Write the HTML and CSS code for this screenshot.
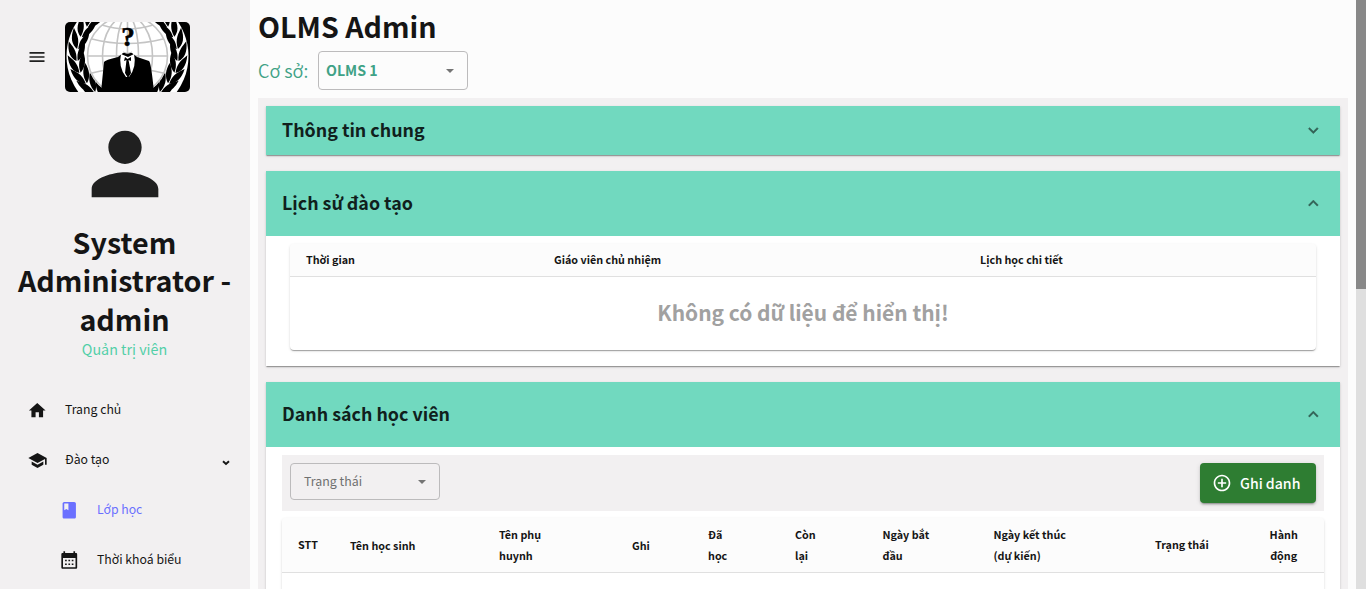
FILE: index.html
```html
<!DOCTYPE html>
<html lang="vi">
<head>
<meta charset="utf-8">
<title>OLMS Admin</title>
<link rel="stylesheet" href="styles.css">
</head>
<body>
<div class="app">
  <aside class="sidebar">
    <div class="brand">
      <svg class="menu-icon" viewBox="0 0 24 24" width="20" height="20"><path d="M3 18h18v-2H3v2zm0-5h18v-2H3v2zm0-7v2h18V6H3z"/></svg>
      <svg class="logo" viewBox="0 0 125 70" width="125" height="70">
        <defs>
          <g id="pair">
            <path d="M0 2C-6-1-9-7-7.500-18C-4-13 1-9 0 2z"/>
            <path d="M1.200 2C0-6 3-12 8.500-17C9.500-9 7-2 1.200 2z"/>
          </g>
          <g id="wreath">
            <use href="#pair" transform="translate(36 76) rotate(-42)"/>
            <use href="#pair" transform="translate(28 69) rotate(-36)"/>
            <use href="#pair" transform="translate(20 60) rotate(-26)"/>
            <use href="#pair" transform="translate(14 49) rotate(-13)"/>
            <use href="#pair" transform="translate(11.500 37) rotate(-1)"/>
            <use href="#pair" transform="translate(12.500 25) rotate(12)"/>
            <use href="#pair" transform="translate(16.500 13) rotate(24)"/>
            <use href="#pair" transform="translate(23 3) rotate(34)"/>
          </g>
        </defs>
        <rect width="125" height="70" fill="#000"/>
        <circle cx="62.500" cy="34" r="61" fill="#fff"/>
        <use href="#wreath"/>
        <use href="#wreath" transform="translate(125 0) scale(-1 1)"/>
        <circle cx="62.500" cy="34" r="41" fill="#fff"/>
        <g fill="none" stroke="#c4c4c4" stroke-width="1.600">
          <circle cx="62.500" cy="34" r="40"/>
          <ellipse cx="62.500" cy="34" rx="25" ry="40"/>
          <ellipse cx="62.500" cy="34" rx="11" ry="40"/>
          <path d="M62.500 0v70M22 34h81M27 17q35 9 71 0M27 51q35-9 71 0M37 3q25 8 51 0"/>
        </g>
        <path d="M36 70L39 40Q40 38 53 35L58 31H67L72 35L84 39Q86 40 89 70z"/>
        <path d="M56 32Q53 45 61 55L64 55Q72 45 69 32L63 35z" fill="#fff"/>
        <path d="M60 35L62.500 37L66 35V39L63.500 38L66 51L63 56L60 51L61.500 38L59 39z"/>
        <path d="M58 30Q62.500 33 67 30" fill="none" stroke="#bbb"/>
        <text class="mark" x="63" y="24.300" text-anchor="middle">?</text>
      </svg>
    </div>
    <svg class="avatar" viewBox="0 0 24 24" width="100" height="100"><path d="M12 12c2.210 0 4-1.790 4-4s-1.790-4-4-4-4 1.790-4 4 1.790 4 4 4zm0 2c-2.670 0-8 1.340-8 4v2h16v-2c0-2.660-5.330-4-8-4z"/></svg>
    <h2 class="user-name">System<br>Administrator -<br>admin</h2>
    <div class="role">Quản trị viên</div>
    <nav class="nav">
      <a class="nav-item"><svg viewBox="-.3 -.6 24 24" width="20" height="20"><path d="M10 20v-6h4v6h5v-8h3L12 3 2 12h3v8z"/></svg><span>Trang chủ</span></a>
      <a class="nav-item"><svg viewBox="-.6 -.6 24 24" width="20" height="20"><path d="M5 13.180v4L12 21l7-3.820v-4L12 17l-7-3.820zM12 3L1 9l11 6 9-4.910V17h2V9L12 3z"/></svg><span>Đào tạo</span><svg class="nav-arrow" viewBox="0 0 8 6" width="8" height="6"><path d="M1 1.200L4 4L7 1.200" fill="none" stroke="#151515" stroke-width="1.900"/></svg></a>
      <a class="nav-item sub active"><svg viewBox="-.3 -.3 24 24" width="20" height="20"><path d="M18 2H6c-1.100 0-2 .9-2 2v16c0 1.100.9 2 2 2h12c1.100 0 2-.9 2-2V4c0-1.100-.9-2-2-2zM6 4h5v8l-2.500-1.500L6 12V4z"/></svg><span>Lớp học</span></a>
      <a class="nav-item sub"><svg viewBox="-.3 -.6 24 24" width="20" height="20"><path fill-rule="evenodd" d="M20 3h-1V1h-2v2H7V1H5v2H4c-.8 0-1.500.7-1.500 1.500v16c0 .8.7 1.500 1.500 1.500h16c.8 0 1.500-.7 1.500-1.500v-16c0-.8-.7-1.500-1.500-1.500zm-.5 17h-15V9h15v11zM7 11h2v2H7zm4 0h2v2h-2zm4 0h2v2h-2zM7 15.500h2v2H7zm4 0h2v2h-2zm4 0h2v2h-2z"/></svg><span>Thời khoá biểu</span></a>
    </nav>
  </aside>

  <main class="main">
    <h1 class="title">OLMS Admin</h1>
    <div class="branch">
      <span class="branch-label">Cơ sở:</span>
      <div class="select branch-select"><span>OLMS 1</span><i class="caret"></i></div>
    </div>
    <div class="content">
      <section class="panel">
        <header class="panel-head closed"><h3>Thông tin chung</h3><svg viewBox="-.4 -.4 24 24" width="20" height="20"><path d="M16.590 8.590L12 13.170 7.410 8.590 6 10l6 6 6-6z"/></svg></header>
      </section>
      <section class="panel">
        <header class="panel-head"><h3>Lịch sử đào tạo</h3><svg viewBox="-.4 -.4 24 24" width="20" height="20"><path d="M12 8l-6 6 1.410 1.410L12 10.830l4.590 4.580L18 14z"/></svg></header>
        <div class="history-body">
          <div class="table">
            <div class="row history-row"><span>Thời gian</span><span>Giáo viên chủ nhiệm</span><span>Lịch học chi tiết</span></div>
            <div class="empty">Không có dữ liệu để hiển thị!</div>
          </div>
        </div>
      </section>
      <section class="panel">
        <header class="panel-head"><h3>Danh sách học viên</h3><svg viewBox="-.4 -.4 24 24" width="20" height="20"><path d="M12 8l-6 6 1.410 1.410L12 10.830l4.590 4.580L18 14z"/></svg></header>
        <div class="students-body">
          <div class="toolbar">
            <div class="select status-select"><span>Trạng thái</span><i class="caret"></i></div>
            <button class="enroll"><svg viewBox="0 0 24 24" width="20" height="20"><path d="M13 7h-2v4H7v2h4v4h2v-4h4v-2h-4V7zm-1-5C6.480 2 2 6.480 2 12s4.480 10 10 10 10-4.480 10-10S17.520 2 12 2zm0 18c-4.410 0-8-3.590-8-8s3.590-8 8-8 8 3.590 8 8-3.590 8-8 8z"/></svg><span>Ghi danh</span></button>
          </div>
          <div class="table students">
            <div class="row student-row"><span class="raised">STT</span><span>Tên học sinh</span><span>Tên phụ<br>huynh</span><span>Ghi</span><span>Đã<br>học</span><span>Còn<br>lại</span><span>Ngày bắt<br>đầu</span><span>Ngày kết thúc<br>(dự kiến)</span><span class="raised">Trạng thái</span><span class="center">Hành<br>động</span></div>
          </div>
        </div>
      </section>
    </div>
  </main>
  <div class="scrollbar"><div class="thumb"></div></div>
</div>
</body>
</html>
```
FILE: styles.css
```css
* { box-sizing: border-box; }
body {
  margin: 0;
  height: 589px;
  overflow: hidden;
  background: #fcfcfc;
  color: #151515;
  font-family: "Noto Sans CJK SC", "Noto Sans", sans-serif;
  font-size: 12.25px;
}
h1, h2, h3 { margin: 0; font-weight: 700; }
svg { display: block; flex: none; }
.app { display: flex; height: 589px; overflow: hidden; }

.sidebar { width: 250px; flex: none; background: #f2f0f1; }
.brand { display: flex; align-items: center; padding: 22px 0 0 27px; }
.logo { margin-left: 18px; border-radius: 5px; }
.mark { font: 700 27px "Liberation Serif", serif; stroke: #000; stroke-width: .6px; }
.menu-icon, .avatar { fill: #202020; }
.avatar { margin: 22px auto 0; }
.user-name { margin-top: 9px; padding-right: 1px; text-align: center; font-size: 28.7px; line-height: 38.4px; }
.role { padding-right: 1px; text-align: center; font-size: 14.3px; line-height: 20px; margin-top: 1px; color: #52cfa8; }
.nav { padding-top: 26px; }
.nav-item { display: flex; align-items: center; height: 50px; padding: 0 20px 0 27px; fill: #151515; }
.nav-item span { margin-left: 18px; padding-bottom: 3px; }
.nav-item.sub { padding-left: 59px; }
.nav-item.active { color: #6b70ff; fill: #6b70ff; }
.nav-arrow { margin: 5px 0 0 auto; }

.main { flex: 1; padding: 6px 8px 0; min-width: 0; }
.title { font-size: 28.6px; line-height: 39px; }
.branch { display: flex; align-items: center; gap: 10px; height: 47px; margin-top: 2px; }
.branch-label { width: 50px; padding-bottom: 2px; font-size: 18px; font-weight: 350; color: #3fa286; white-space: nowrap; }
.select {
  display: flex; align-items: center; justify-content: space-between;
  width: 150px; border: 1px solid #bcbbbc; border-radius: 4px;
}
.branch-select { height: 39px; padding: 0 13px 0 7px; font-size: 14.2px; font-weight: 700; color: #3fa286; }
.select span { padding-bottom: 2px; }
.caret { border: 4.5px solid transparent; border-top-color: #747474; border-bottom: 0; }

.content { background: #f2f0f1; padding: 8px 8px 0; height: 600px; margin-top: 4px; }
.panel {
  background: #fff; margin-bottom: 16px;
  box-shadow: 0 2px 1px -1px rgba(0,0,0,.2), 0 1px 1px rgba(0,0,0,.14), 0 1px 3px rgba(0,0,0,.12);
}
.panel-head {
  display: flex; align-items: center; justify-content: space-between;
  height: 65px; padding: 0 17px 1px 16px; background: #71d9bf;
}
.panel-head.closed { height: 49px; }
.panel-head h3 { padding-bottom: 3px; font-size: 17.85px; line-height: 28px; color: #10201c; }
.panel-head svg { fill: #336256; stroke: #336256; stroke-width: .4px; }
.history-body { padding: 8px 24px 16px; }
.table {
  border-radius: 4px; overflow: hidden; background: #fff;
  box-shadow: 0 2px 1px -1px rgba(0,0,0,.2), 0 1px 1px rgba(0,0,0,.14), 0 1px 3px rgba(0,0,0,.12);
}
.row { display: grid; align-items: center; background: #fcfcfc; border-bottom: 1px solid #e0e0e0; padding-left: 16px; font-size: 10.75px; font-weight: 700; line-height: 21px; white-space: nowrap; }
.history-row { grid-template-columns: 248px 426px 1fr; height: 33px; padding-bottom: 2px; }
.empty { height: 73px; display: flex; align-items: center; justify-content: center; padding-bottom: 4px; font-size: 20.95px; font-weight: 700; color: #a1a1a1; }

.students-body { padding: 8px 16px; }
.toolbar { display: flex; justify-content: space-between; align-items: flex-start; height: 56px; padding: 8px; background: #f2f0f1; }
.status-select { height: 37px; padding: 0 13px 0 13px; font-size: 12.4px; color: #707070; }
.enroll {
  display: flex; align-items: center; width: 116px; height: 40px; padding: 0 0 0 12px; border: 0; border-radius: 4px;
  color: #fff; fill: #fff; background: #2e7d32; font-family: inherit; font-size: 14.1px; font-weight: 500;
  box-shadow: 0 3px 1px -2px rgba(0,0,0,.2), 0 2px 2px rgba(0,0,0,.14), 0 1px 5px rgba(0,0,0,.12);
}
.enroll span { margin-left: 8px; padding-bottom: 1px; }
.students { margin-top: 7px; height: 200px; }
.student-row { grid-template-columns: 52px 149px 133px 76px 87px 87.5px 111px 161.5px 114.5px 1fr; height: 55px; }
.raised { padding-bottom: 2px; }
.center { justify-self: start; text-align: center; }

.scrollbar { width: 10px; flex: none; background: #dfdfdf; }
.thumb { height: 289px; background: #888; }
```
